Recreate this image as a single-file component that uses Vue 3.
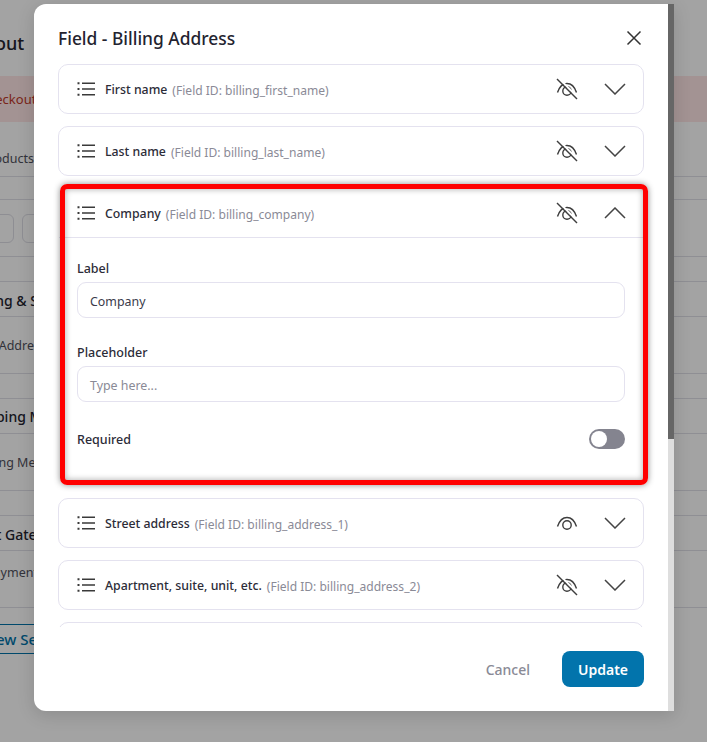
<script setup>
const rows = [
  { h: 55, text: 'Products', indent: -18, cls: 'bg-sub', pt: 18 },
  { h: 23 },
  { h: 57, chips: true },
  { h: 25 },
  { h: 35, text: 'Billing & Shipping', indent: -29, cls: 'bg-head', pt: 2 },
  { h: 57, text: 'Billing Address', indent: -41, cls: 'bg-sub' },
  { h: 25 },
  { h: 35, text: 'Shipping Method', indent: -33, cls: 'bg-head' },
  { h: 57, text: 'Shipping Method', indent: -38, cls: 'bg-sub' },
  { h: 25 },
  { h: 35, text: 'Payment Gateway', indent: -58, cls: 'bg-head', pt: 2 },
  { h: 57, text: 'Payment', indent: -14, cls: 'bg-sub', pb: 14 }
]
const before = [
  { label: 'First name', id: 'billing_first_name', hidden: true },
  { label: 'Last name', id: 'billing_last_name', hidden: true }
]
const after = [
  { label: 'Street address', id: 'billing_address_1', hidden: false },
  { label: 'Apartment, suite, unit, etc.', id: 'billing_address_2', hidden: true }
]
</script>

<template>
  <div class="page">
    <div class="bg">
      <div class="bg-title">Checkout</div>
      <div class="bg-banner"><span>Checkout</span></div>
      <div
        v-for="(r, i) in rows"
        :key="i"
        class="bg-row"
        :style="{ height: r.h + 'px', paddingTop: (r.pt || 0) + 'px', paddingBottom: (r.pb || 0) + 'px' }"
      >
        <span v-if="r.text" :class="r.cls" :style="{ marginLeft: r.indent + 'px' }">{{ r.text }}</span>
        <div v-if="r.chips" class="chips"><i></i><i></i></div>
      </div>
      <div class="bg-button"><span>Add New Section</span></div>
    </div>
    <div class="overlay"></div>

    <div class="modal">
      <div class="modal-main">
        <header class="modal-head">
          <h2>Field - Billing Address</h2>
          <svg class="close" width="16" height="16" viewBox="0 0 16 16"><path d="M1.5 1.5l13 13M14.5 1.5l-13 13" /></svg>
        </header>

        <div class="modal-body">
          <div v-for="f in before" :key="f.id" class="card">
            <div class="card-head">
              <svg class="list" width="18" height="14" viewBox="0 0 18 14"><path d="M5 1.2h13M5 7h13M5 12.8h13" /><path class="dots" d="M.5 1.2h2M.5 7h2M.5 12.8h2" /></svg>
              <span class="name">{{ f.label }}</span>
              <span class="fid">(Field ID: {{ f.id }})</span>
              <svg class="eye" width="22" height="22" viewBox="0 0 22 22"><path d="M1.5 14.5C3.5 8.500 7 5.500 11 5.500s7.500 3 9.500 9" /><circle cx="11" cy="13" r="4.200" /><path class="gap" d="M3.200 0.800l18 18" /><path d="M1 1l20 20" /></svg>
              <svg class="chev" width="22" height="12" viewBox="0 0 22 12"><path d="M1 1l10 10L21 1" /></svg>
            </div>
          </div>

          <div class="card card-open">
            <div class="card-head head-open">
              <svg class="list" width="18" height="14" viewBox="0 0 18 14"><path d="M5 1.2h13M5 7h13M5 12.8h13" /><path class="dots" d="M.5 1.2h2M.5 7h2M.5 12.8h2" /></svg>
              <span class="name">Company</span>
              <span class="fid">(Field ID: billing_company)</span>
              <svg class="eye" width="22" height="22" viewBox="0 0 22 22"><path d="M1.5 14.5C3.5 8.500 7 5.500 11 5.500s7.500 3 9.500 9" /><circle cx="11" cy="13" r="4.200" /><path class="gap" d="M3.200 0.800l18 18" /><path d="M1 1l20 20" /></svg>
              <svg class="chev" width="22" height="12" viewBox="0 0 22 12"><path d="M1 11L11 1l10 10" /></svg>
            </div>
            <div class="card-body">
              <label class="lbl">Label</label>
              <div class="input val">Company</div>
              <label class="lbl second">Placeholder</label>
              <div class="input ph">Type here...</div>
              <div class="req">
                <span class="lbl">Required</span>
                <span class="toggle"><b></b></span>
              </div>
            </div>
            <div class="highlight"></div>
          </div>

          <div v-for="f in after" :key="f.id" class="card">
            <div class="card-head">
              <svg class="list" width="18" height="14" viewBox="0 0 18 14"><path d="M5 1.2h13M5 7h13M5 12.8h13" /><path class="dots" d="M.5 1.2h2M.5 7h2M.5 12.8h2" /></svg>
              <span class="name">{{ f.label }}</span>
              <span class="fid">(Field ID: {{ f.id }})</span>
              <svg class="eye" width="22" height="22" viewBox="0 0 22 22">
                <path d="M1.5 14.5C3.5 8.500 7 5.500 11 5.500s7.500 3 9.500 9" />
                <circle cx="11" cy="13" r="4.200" />
                <template v-if="f.hidden">
                  <path class="gap" d="M3.200 0.800l18 18" />
                  <path d="M1 1l20 20" />
                </template>
              </svg>
              <svg class="chev" width="22" height="12" viewBox="0 0 22 12"><path d="M1 1l10 10L21 1" /></svg>
            </div>
          </div>
          <div class="card"></div>
        </div>

        <footer class="modal-foot">
          <span class="cancel">Cancel</span>
          <span class="update">Update</span>
        </footer>
      </div>
      <div class="scrollbar"><div class="thumb"></div></div>
    </div>
  </div>
</template>

<style>
html, body { margin: 0; background: #a3a3a3; }
</style>

<style scoped>
.page {
  position: relative;
  width: 707px;
  height: 742px;
  overflow: hidden;
  background: #fff;
  font-family: "Noto Sans", "Open Sans", sans-serif;
  color: #23232f;
}
.bg { display: flex; flex-direction: column; }
.bg-title {
  height: 76px;
  line-height: 86px;
  margin-left: -57px;
  font-size: 18px;
  font-weight: 500;
  white-space: nowrap;
}
.bg-banner {
  height: 46px;
  line-height: 46px;
  background: #ffe6e6;
  color: #c0392b;
  font-size: 13px;
  white-space: nowrap;
}
.bg-banner span { margin-left: -21px; }
.bg-row {
  box-sizing: border-box;
  border-bottom: 1px solid #e0e0e8;
  display: flex;
  align-items: center;
  white-space: nowrap;
}
.bg-sub { font-size: 12.5px; color: #50505c; }
.bg-head { font-size: 14px; font-weight: 500; }
.chips { display: flex; gap: 8px; margin-left: -30px; }
.chips i {
  display: block;
  width: 42px;
  height: 27px;
  border: 1px solid #dedee6;
  border-radius: 6px;
}
.bg-button {
  box-sizing: border-box;
  margin: 16px 0 0 -60px;
  padding-left: 11px;
  width: 140px;
  height: 30px;
  line-height: 28px;
  border: 1px solid #0073aa;
  border-radius: 4px;
  color: #0073aa;
  font-size: 15px;
  font-weight: 500;
  white-space: nowrap;
}
.overlay { position: absolute; inset: 0; background: rgba(0, 0, 0, .36); }

.modal {
  position: absolute;
  left: 34px;
  top: 4px;
  width: 640px;
  height: 707px;
  display: flex;
  background: #fff;
  border-radius: 12px 0 0 12px;
  box-shadow: 0 4px 18px rgba(0, 0, 0, .14);
  overflow: hidden;
}
.modal-main { flex: 1; min-width: 0; display: flex; flex-direction: column; }
.scrollbar { width: 6px; background: #dedede; }
.thumb { height: 435px; background: #666; }

.modal-head {
  height: 60px;
  flex: none;
  box-sizing: border-box;
  padding: 8px 26px 0 24px;
  display: flex;
  align-items: center;
  justify-content: space-between;
}
.modal-head h2 { margin: 0; font-size: 17.4px; font-weight: 500; color: #23232f; }
.close path { fill: none; stroke: #333; stroke-width: 1.5; }

.modal-body {
  height: 563px;
  flex: none;
  padding: 0 24px;
  display: flex;
  flex-direction: column;
  gap: 12px;
  overflow: hidden;
}
.card {
  position: relative;
  flex: none;
  box-sizing: border-box;
  min-height: 50px;
  border: 1px solid #e4e2ef;
  border-radius: 10px;
  background: #fff;
}
.card-open { border-color: transparent; }
.card-head {
  box-sizing: border-box;
  height: 48px;
  padding: 0 17px 0 18px;
  display: flex;
  align-items: center;
}
.head-open { height: 49px; border-bottom: 1px solid #e4e2ef; }
.list { flex: none; margin-right: 10px; }
.list path { fill: none; stroke: #3a3a3a; stroke-width: 1.6; }
.list .dots { stroke-width: 2; }
.name { font-size: 12.3px; font-weight: 500; color: #2c2c38; white-space: nowrap; }
.fid { margin: 2px 0 0 5px; font-size: 12.05px; color: #8a8a96; white-space: nowrap; }
.eye { flex: none; margin-left: auto; margin-right: 26px; }
.eye path, .eye circle { fill: none; stroke: #3e3e3e; stroke-width: 1.4; }
.eye .gap { stroke: #fff; stroke-width: 2; }
.chev { flex: none; }
.chev path { fill: none; stroke: #444; stroke-width: 1.5; }

.card-body { padding: 20px 18px 36px; display: flex; flex-direction: column; }
.lbl { font-size: 12.5px; font-weight: 500; line-height: 22px; color: #2c2c38; display: block; }
.second { margin-top: 24px; }
.input {
  box-sizing: border-box;
  height: 36px;
  margin-top: 2px;
  padding: 0 12px;
  border: 1px solid #e4e2ef;
  border-radius: 9px;
  font-size: 12.4px;
  line-height: 38px;
}
.val { color: #3a3a4a; }
.ph { color: #8a8a96; }
.req { margin-top: 27px; height: 20px; display: flex; align-items: center; justify-content: space-between; }
.req .lbl { padding-top: 2px; }
.toggle {
  box-sizing: border-box;
  width: 36px;
  height: 20px;
  padding: 2px;
  border-radius: 10px;
  background: #84848f;
  display: flex;
}
.toggle b { width: 16px; height: 16px; border-radius: 50%; background: #fff; }
.highlight {
  position: absolute;
  left: 1px;
  top: -5px;
  width: 588px;
  height: 301px;
  box-sizing: border-box;
  border: 5px solid #ff0000;
  border-radius: 7px;
  box-shadow: 0 0 6px rgba(0, 0, 0, .45), inset 0 0 6px rgba(0, 0, 0, .35);
  pointer-events: none;
}

.modal-foot {
  flex: 1;
  padding: 24px 24px 0;
  display: flex;
  justify-content: flex-end;
  align-items: flex-start;
  gap: 32px;
}
.cancel { font-size: 14px; font-weight: 500; line-height: 38px; color: #8a8a96; }
.update {
  width: 82px;
  height: 36px;
  border-radius: 8px;
  background: #0274ac;
  color: #fff;
  font-size: 14px;
  font-weight: 600;
  line-height: 38px;
  text-align: center;
}
</style>
